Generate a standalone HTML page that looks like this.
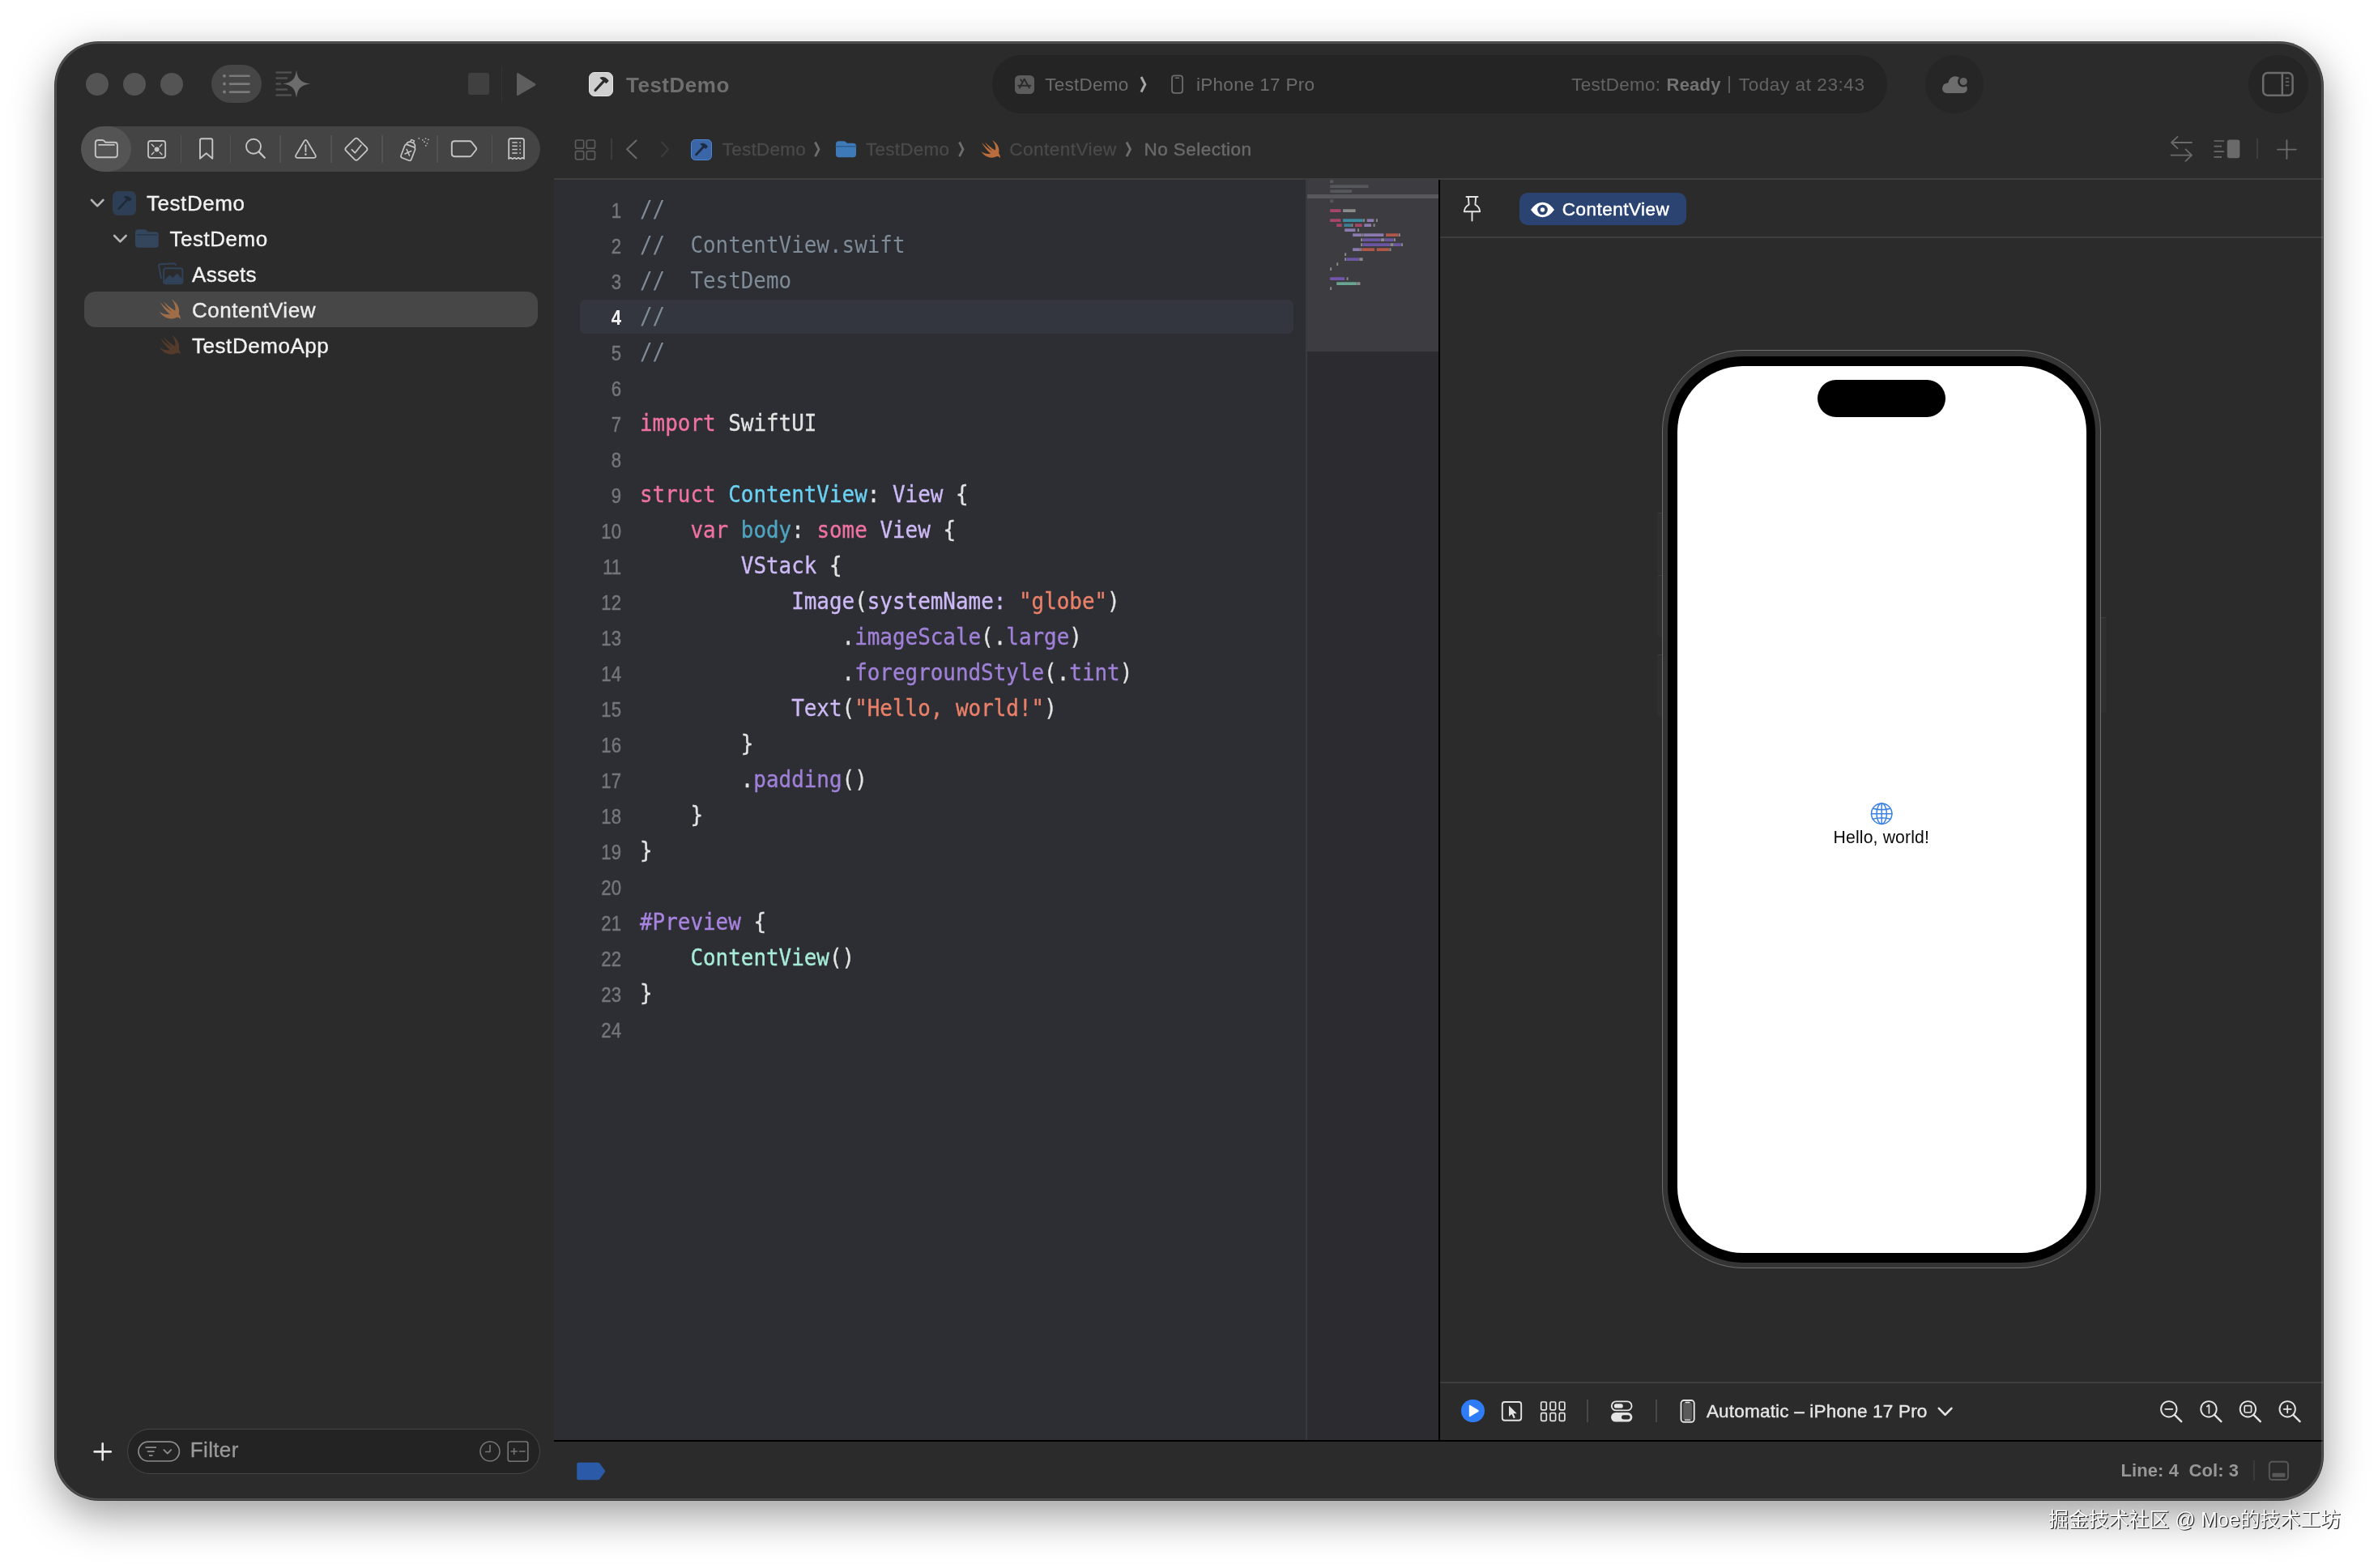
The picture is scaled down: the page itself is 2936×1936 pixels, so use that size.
<!DOCTYPE html>
<html lang="zh"><head><meta charset="utf-8"><title>TestDemo — ContentView.swift</title>
<style>
html,body{margin:0;padding:0}
body{width:2936px;height:1936px;background:#fff;position:relative;overflow:hidden}
#win{position:absolute;left:68px;top:52px;width:2800px;height:1800px;border-radius:54px;background:#2b2b2b;
 box-shadow:0 0 0 1px rgba(0,0,0,.72),0 18px 54px rgba(0,0,0,.4);}
#clip{position:absolute;left:0;top:0;width:2800px;height:1800px;border-radius:54px;overflow:hidden}
.pg{position:absolute;left:-68px;top:-52px;width:2936px;height:1936px;will-change:transform}
.pg>div{position:absolute;white-space:pre}
.ui{font-family:"Liberation Sans","Noto Sans CJK SC",sans-serif}
.mono{font-family:"DejaVu Sans Mono","Liberation Mono",monospace}
#edge{position:absolute;left:0;top:0;width:2800px;height:1800px;border-radius:54px;box-sizing:border-box;border:2px solid rgba(255,255,255,.17);pointer-events:none}
svg.ov{position:absolute;left:0;top:0}
.wm{position:absolute;white-space:pre;font-family:"Liberation Sans","Noto Sans CJK SC",sans-serif}
</style></head>
<body>
<div id="win"><div id="clip"><div class="pg">
<div style="left:684px;top:221px;width:929px;height:1557px;background:#2d2e33;"></div>
<div style="left:1613px;top:221px;width:164px;height:1557px;background:#2c2c30;"></div>
<div style="left:1612px;top:221px;width:2px;height:1557px;background:#3a3b3f;"></div>
<div style="left:1614px;top:221px;width:162px;height:213px;background:#3d3d41;"></div>
<div style="left:1614px;top:240px;width:162px;height:5px;background:#58585c;"></div>
<div style="left:1778px;top:221px;width:1090px;height:1557px;background:#2b2b2c;"></div>
<div style="left:1776px;top:222px;width:2px;height:1557px;background:#000;"></div>
<div style="left:684px;top:1778px;width:2184px;height:2px;background:#000;"></div>
<div style="left:684px;top:220px;width:2184px;height:2px;background:#3e3e3e;"></div>
<div style="left:1778px;top:292px;width:1090px;height:2px;background:#3e3e3e;"></div>
<div style="left:1778px;top:1706px;width:1090px;height:2px;background:#3e3e3e;"></div>
<div style="left:106px;top:90px;width:28px;height:28px;background:#545454;border-radius:50%"></div>
<div style="left:152px;top:90px;width:28px;height:28px;background:#545454;border-radius:50%"></div>
<div style="left:198px;top:90px;width:28px;height:28px;background:#545454;border-radius:50%"></div>
<div style="left:261px;top:80px;width:62px;height:47px;background:#464646;border-radius:24px"></div>
<div style="left:577.5px;top:90px;width:26.5px;height:26.5px;background:#404040;border-radius:3px"></div>
<div style="left:618.5px;top:82px;width:1.5px;height:44px;background:#333;"></div>
<div style="left:727px;top:89px;width:30px;height:30px;background:#cfcfcf;border-radius:7px;box-sizing:border-box;border:1.500px solid #e4e4e4"></div>
<div class="ui" style="left:773px;top:86.50px;height:36px;line-height:36px;font-size:26px;color:#6f6f6f;font-weight:bold;letter-spacing:0.5px;">TestDemo</div>
<div style="left:1225px;top:68px;width:1105px;height:72px;background:#242424;border-radius:36px"></div>
<div style="left:1253px;top:92.5px;width:23.5px;height:23.5px;background:#5c5c5c;border-radius:5.500px"></div>
<div class="ui" style="left:1290.2px;top:88.80px;height:31px;line-height:31px;font-size:22.5px;color:#6c6c6c;font-weight:normal;letter-spacing:0.25px;">TestDemo</div>
<div class="ui" style="left:1477px;top:88.80px;height:31px;line-height:31px;font-size:22.5px;color:#6c6c6c;font-weight:normal;letter-spacing:0.28px;">iPhone 17 Pro</div>
<div class="ui" style="left:1940.2px;top:88.80px;height:31px;line-height:31px;font-size:22.5px;color:#636363;font-weight:normal;letter-spacing:0.3px;">TestDemo: </div>
<div class="ui" style="left:2057.5px;top:88.80px;height:31px;line-height:31px;font-size:22px;color:#737373;font-weight:bold;letter-spacing:0.25px;">Ready</div>
<div style="left:2134.2px;top:94px;width:1.8px;height:21px;background:#5a5a5a;"></div>
<div class="ui" style="left:2146.8px;top:88.80px;height:31px;line-height:31px;font-size:22.5px;color:#636363;font-weight:normal;letter-spacing:0.58px;">Today at 23:43</div>
<div style="left:2377px;top:68px;width:72px;height:72px;background:#262626;border-radius:50%"></div>
<div style="left:2776px;top:68px;width:74px;height:72px;background:#252525;border-radius:36px"></div>
<div style="left:754px;top:171px;width:1.5px;height:26px;background:#3c3c3c;"></div>
<div style="left:853px;top:172px;width:25.5px;height:25.5px;background:#3a66a8;border-radius:5.500px;box-sizing:border-box;border:1.800px solid #4d86d6"></div>
<div class="ui" style="left:891.8px;top:168.80px;height:31px;line-height:31px;font-size:22.5px;color:#4a4a4a;font-weight:normal;letter-spacing:0.25px;-webkit-text-stroke:0.300px #4a4a4a;">TestDemo</div>
<div class="ui" style="left:1069px;top:168.80px;height:31px;line-height:31px;font-size:22.5px;color:#4a4a4a;font-weight:normal;letter-spacing:0.25px;-webkit-text-stroke:0.300px #4a4a4a;">TestDemo</div>
<div class="ui" style="left:1246.2px;top:168.80px;height:31px;line-height:31px;font-size:22.5px;color:#4a4a4a;font-weight:normal;letter-spacing:0.5px;-webkit-text-stroke:0.300px #4a4a4a;">ContentView</div>
<div class="ui" style="left:1412.5px;top:168.80px;height:31px;line-height:31px;font-size:22.5px;color:#6a6a6a;font-weight:normal;letter-spacing:0.45px;-webkit-text-stroke:0.4px #6a6a6a;">No Selection</div>
<div style="left:2786px;top:171px;width:1.6px;height:25px;background:#3e3e3e;"></div>
<div style="left:100px;top:156px;width:567px;height:56px;background:#444444;border-radius:28px"></div>
<div style="left:100px;top:156px;width:62px;height:56px;background:#545454;border-radius:28px"></div>
<div style="left:222.89999999999998px;top:166.5px;width:1.6px;height:34px;background:#525252;"></div>
<div style="left:283.7px;top:166.5px;width:1.6px;height:34px;background:#525252;"></div>
<div style="left:345.2px;top:166.5px;width:1.6px;height:34px;background:#525252;"></div>
<div style="left:408.2px;top:166.5px;width:1.6px;height:34px;background:#525252;"></div>
<div style="left:471.2px;top:166.5px;width:1.6px;height:34px;background:#525252;"></div>
<div style="left:539.2px;top:166.5px;width:1.6px;height:34px;background:#525252;"></div>
<div style="left:606.9000000000001px;top:166.5px;width:1.6px;height:34px;background:#525252;"></div>
<div style="left:104px;top:360px;width:560px;height:44px;background:#474747;border-radius:14px"></div>
<div class="ui" style="left:181px;top:232.50px;height:36px;line-height:36px;font-size:26px;color:#f2f2f2;font-weight:normal;letter-spacing:0.55px;-webkit-text-stroke:0.350px #f2f2f2;">TestDemo</div>
<div class="ui" style="left:209.4px;top:276.50px;height:36px;line-height:36px;font-size:26px;color:#f2f2f2;font-weight:normal;letter-spacing:0.55px;-webkit-text-stroke:0.350px #f2f2f2;">TestDemo</div>
<div class="ui" style="left:237px;top:320.50px;height:36px;line-height:36px;font-size:26px;color:#f2f2f2;font-weight:normal;letter-spacing:0.3px;-webkit-text-stroke:0.350px #f2f2f2;">Assets</div>
<div class="ui" style="left:237px;top:364.50px;height:36px;line-height:36px;font-size:26px;color:#ededed;font-weight:normal;letter-spacing:0.55px;-webkit-text-stroke:0.350px #ededed;">ContentView</div>
<div class="ui" style="left:237px;top:408.50px;height:36px;line-height:36px;font-size:26px;color:#f2f2f2;font-weight:normal;letter-spacing:0.55px;-webkit-text-stroke:0.350px #f2f2f2;">TestDemoApp</div>
<div style="left:139px;top:235.5px;width:29px;height:30px;background:#2c3f57;border-radius:6.500px;box-sizing:border-box;border:2px solid #303e52"></div>
<div style="left:157px;top:1764px;width:510px;height:56px;background:#232323;border-radius:28px;box-sizing:border-box;border:1.500px solid #474747"></div>
<div class="ui" style="left:234.8px;top:1771.60px;height:36px;line-height:36px;font-size:26px;color:#9a9a9a;font-weight:normal;letter-spacing:0.35px;-webkit-text-stroke:0.300px #9a9a9a;">Filter</div>
<div style="left:716px;top:369.5px;width:881px;height:42px;background:#34363f;border-radius:7px"></div>
<div class="ui" style="right:2168.8px;top:242.50px;height:35px;line-height:35px;font-size:25.2px;color:#75767c;font-weight:normal;letter-spacing:0px;transform:scaleX(.880);transform-origin:100% 50%;-webkit-text-stroke:0.450px #75767c;">1</div>
<div class="mono" style="left:789.600px;top:236.00px;height:44px;line-height:44px;font-size:28.6px;transform:scaleX(0.9060);transform-origin:0 50%"><span style="color:#7f8c98">//</span></div>
<div class="ui" style="right:2168.8px;top:286.50px;height:35px;line-height:35px;font-size:25.2px;color:#75767c;font-weight:normal;letter-spacing:0px;transform:scaleX(.880);transform-origin:100% 50%;-webkit-text-stroke:0.450px #75767c;">2</div>
<div class="mono" style="left:789.600px;top:280.00px;height:44px;line-height:44px;font-size:28.6px;transform:scaleX(0.9060);transform-origin:0 50%"><span style="color:#7f8c98">//  ContentView.swift</span></div>
<div class="ui" style="right:2168.8px;top:330.50px;height:35px;line-height:35px;font-size:25.2px;color:#75767c;font-weight:normal;letter-spacing:0px;transform:scaleX(.880);transform-origin:100% 50%;-webkit-text-stroke:0.450px #75767c;">3</div>
<div class="mono" style="left:789.600px;top:324.00px;height:44px;line-height:44px;font-size:28.6px;transform:scaleX(0.9060);transform-origin:0 50%"><span style="color:#7f8c98">//  TestDemo</span></div>
<div class="ui" style="right:2168.8px;top:374.50px;height:35px;line-height:35px;font-size:25.2px;color:#f2f2f2;font-weight:bold;letter-spacing:0px;transform:scaleX(.880);transform-origin:100% 50%;">4</div>
<div class="mono" style="left:789.600px;top:368.00px;height:44px;line-height:44px;font-size:28.6px;transform:scaleX(0.9060);transform-origin:0 50%"><span style="color:#7f8c98">//</span></div>
<div class="ui" style="right:2168.8px;top:418.50px;height:35px;line-height:35px;font-size:25.2px;color:#75767c;font-weight:normal;letter-spacing:0px;transform:scaleX(.880);transform-origin:100% 50%;-webkit-text-stroke:0.450px #75767c;">5</div>
<div class="mono" style="left:789.600px;top:412.00px;height:44px;line-height:44px;font-size:28.6px;transform:scaleX(0.9060);transform-origin:0 50%"><span style="color:#7f8c98">//</span></div>
<div class="ui" style="right:2168.8px;top:462.50px;height:35px;line-height:35px;font-size:25.2px;color:#75767c;font-weight:normal;letter-spacing:0px;transform:scaleX(.880);transform-origin:100% 50%;-webkit-text-stroke:0.450px #75767c;">6</div>
<div class="ui" style="right:2168.8px;top:506.50px;height:35px;line-height:35px;font-size:25.2px;color:#75767c;font-weight:normal;letter-spacing:0px;transform:scaleX(.880);transform-origin:100% 50%;-webkit-text-stroke:0.450px #75767c;">7</div>
<div class="mono" style="left:789.600px;top:500.00px;height:44px;line-height:44px;font-size:28.6px;-webkit-text-stroke:0.350px;transform:scaleX(0.9060);transform-origin:0 50%"><span style="color:#ef72a2">import</span><span style="color:#e3e3e3"> SwiftUI</span></div>
<div class="ui" style="right:2168.8px;top:550.50px;height:35px;line-height:35px;font-size:25.2px;color:#75767c;font-weight:normal;letter-spacing:0px;transform:scaleX(.880);transform-origin:100% 50%;-webkit-text-stroke:0.450px #75767c;">8</div>
<div class="ui" style="right:2168.8px;top:594.50px;height:35px;line-height:35px;font-size:25.2px;color:#75767c;font-weight:normal;letter-spacing:0px;transform:scaleX(.880);transform-origin:100% 50%;-webkit-text-stroke:0.450px #75767c;">9</div>
<div class="mono" style="left:789.600px;top:588.00px;height:44px;line-height:44px;font-size:28.6px;-webkit-text-stroke:0.350px;transform:scaleX(0.9060);transform-origin:0 50%"><span style="color:#ef72a2">struct</span><span style="color:#e3e3e3"> </span><span style="color:#6bd2f4">ContentView</span><span style="color:#e3e3e3">: </span><span style="color:#cdb9f6">View</span><span style="color:#e3e3e3"> {</span></div>
<div class="ui" style="right:2168.8px;top:638.50px;height:35px;line-height:35px;font-size:25.2px;color:#75767c;font-weight:normal;letter-spacing:0px;transform:scaleX(.880);transform-origin:100% 50%;-webkit-text-stroke:0.450px #75767c;">10</div>
<div class="mono" style="left:789.600px;top:632.00px;height:44px;line-height:44px;font-size:28.6px;-webkit-text-stroke:0.350px;transform:scaleX(0.9060);transform-origin:0 50%"><span style="color:#e3e3e3">    </span><span style="color:#ef72a2">var</span><span style="color:#e3e3e3"> </span><span style="color:#4fa5c0">body</span><span style="color:#e3e3e3">: </span><span style="color:#ef72a2">some</span><span style="color:#e3e3e3"> </span><span style="color:#cdb9f6">View</span><span style="color:#e3e3e3"> {</span></div>
<div class="ui" style="right:2168.8px;top:682.50px;height:35px;line-height:35px;font-size:25.2px;color:#75767c;font-weight:normal;letter-spacing:0px;transform:scaleX(.880);transform-origin:100% 50%;-webkit-text-stroke:0.450px #75767c;">11</div>
<div class="mono" style="left:789.600px;top:676.00px;height:44px;line-height:44px;font-size:28.6px;-webkit-text-stroke:0.350px;transform:scaleX(0.9060);transform-origin:0 50%"><span style="color:#e3e3e3">        </span><span style="color:#cdb9f6">VStack</span><span style="color:#e3e3e3"> {</span></div>
<div class="ui" style="right:2168.8px;top:726.50px;height:35px;line-height:35px;font-size:25.2px;color:#75767c;font-weight:normal;letter-spacing:0px;transform:scaleX(.880);transform-origin:100% 50%;-webkit-text-stroke:0.450px #75767c;">12</div>
<div class="mono" style="left:789.600px;top:720.00px;height:44px;line-height:44px;font-size:28.6px;-webkit-text-stroke:0.350px;transform:scaleX(0.9060);transform-origin:0 50%"><span style="color:#e3e3e3">            </span><span style="color:#cdb9f6">Image</span><span style="color:#e3e3e3">(</span><span style="color:#cdb9f6">systemName:</span><span style="color:#e3e3e3"> </span><span style="color:#ea8069">"globe"</span><span style="color:#e3e3e3">)</span></div>
<div class="ui" style="right:2168.8px;top:770.50px;height:35px;line-height:35px;font-size:25.2px;color:#75767c;font-weight:normal;letter-spacing:0px;transform:scaleX(.880);transform-origin:100% 50%;-webkit-text-stroke:0.450px #75767c;">13</div>
<div class="mono" style="left:789.600px;top:764.00px;height:44px;line-height:44px;font-size:28.6px;-webkit-text-stroke:0.350px;transform:scaleX(0.9060);transform-origin:0 50%"><span style="color:#e3e3e3">                .</span><span style="color:#a081d8">imageScale</span><span style="color:#e3e3e3">(.</span><span style="color:#a081d8">large</span><span style="color:#e3e3e3">)</span></div>
<div class="ui" style="right:2168.8px;top:814.50px;height:35px;line-height:35px;font-size:25.2px;color:#75767c;font-weight:normal;letter-spacing:0px;transform:scaleX(.880);transform-origin:100% 50%;-webkit-text-stroke:0.450px #75767c;">14</div>
<div class="mono" style="left:789.600px;top:808.00px;height:44px;line-height:44px;font-size:28.6px;-webkit-text-stroke:0.350px;transform:scaleX(0.9060);transform-origin:0 50%"><span style="color:#e3e3e3">                .</span><span style="color:#a081d8">foregroundStyle</span><span style="color:#e3e3e3">(.</span><span style="color:#a081d8">tint</span><span style="color:#e3e3e3">)</span></div>
<div class="ui" style="right:2168.8px;top:858.50px;height:35px;line-height:35px;font-size:25.2px;color:#75767c;font-weight:normal;letter-spacing:0px;transform:scaleX(.880);transform-origin:100% 50%;-webkit-text-stroke:0.450px #75767c;">15</div>
<div class="mono" style="left:789.600px;top:852.00px;height:44px;line-height:44px;font-size:28.6px;-webkit-text-stroke:0.350px;transform:scaleX(0.9060);transform-origin:0 50%"><span style="color:#e3e3e3">            </span><span style="color:#cdb9f6">Text</span><span style="color:#e3e3e3">(</span><span style="color:#ea8069">"Hello, world!"</span><span style="color:#e3e3e3">)</span></div>
<div class="ui" style="right:2168.8px;top:902.50px;height:35px;line-height:35px;font-size:25.2px;color:#75767c;font-weight:normal;letter-spacing:0px;transform:scaleX(.880);transform-origin:100% 50%;-webkit-text-stroke:0.450px #75767c;">16</div>
<div class="mono" style="left:789.600px;top:896.00px;height:44px;line-height:44px;font-size:28.6px;-webkit-text-stroke:0.350px;transform:scaleX(0.9060);transform-origin:0 50%"><span style="color:#e3e3e3">        }</span></div>
<div class="ui" style="right:2168.8px;top:946.50px;height:35px;line-height:35px;font-size:25.2px;color:#75767c;font-weight:normal;letter-spacing:0px;transform:scaleX(.880);transform-origin:100% 50%;-webkit-text-stroke:0.450px #75767c;">17</div>
<div class="mono" style="left:789.600px;top:940.00px;height:44px;line-height:44px;font-size:28.6px;-webkit-text-stroke:0.350px;transform:scaleX(0.9060);transform-origin:0 50%"><span style="color:#e3e3e3">        .</span><span style="color:#a081d8">padding</span><span style="color:#e3e3e3">()</span></div>
<div class="ui" style="right:2168.8px;top:990.50px;height:35px;line-height:35px;font-size:25.2px;color:#75767c;font-weight:normal;letter-spacing:0px;transform:scaleX(.880);transform-origin:100% 50%;-webkit-text-stroke:0.450px #75767c;">18</div>
<div class="mono" style="left:789.600px;top:984.00px;height:44px;line-height:44px;font-size:28.6px;-webkit-text-stroke:0.350px;transform:scaleX(0.9060);transform-origin:0 50%"><span style="color:#e3e3e3">    }</span></div>
<div class="ui" style="right:2168.8px;top:1034.50px;height:35px;line-height:35px;font-size:25.2px;color:#75767c;font-weight:normal;letter-spacing:0px;transform:scaleX(.880);transform-origin:100% 50%;-webkit-text-stroke:0.450px #75767c;">19</div>
<div class="mono" style="left:789.600px;top:1028.00px;height:44px;line-height:44px;font-size:28.6px;-webkit-text-stroke:0.350px;transform:scaleX(0.9060);transform-origin:0 50%"><span style="color:#e3e3e3">}</span></div>
<div class="ui" style="right:2168.8px;top:1078.50px;height:35px;line-height:35px;font-size:25.2px;color:#75767c;font-weight:normal;letter-spacing:0px;transform:scaleX(.880);transform-origin:100% 50%;-webkit-text-stroke:0.450px #75767c;">20</div>
<div class="ui" style="right:2168.8px;top:1122.50px;height:35px;line-height:35px;font-size:25.2px;color:#75767c;font-weight:normal;letter-spacing:0px;transform:scaleX(.880);transform-origin:100% 50%;-webkit-text-stroke:0.450px #75767c;">21</div>
<div class="mono" style="left:789.600px;top:1116.00px;height:44px;line-height:44px;font-size:28.6px;-webkit-text-stroke:0.350px;transform:scaleX(0.9060);transform-origin:0 50%"><span style="color:#a884e0">#Preview</span><span style="color:#e3e3e3"> {</span></div>
<div class="ui" style="right:2168.8px;top:1166.50px;height:35px;line-height:35px;font-size:25.2px;color:#75767c;font-weight:normal;letter-spacing:0px;transform:scaleX(.880);transform-origin:100% 50%;-webkit-text-stroke:0.450px #75767c;">22</div>
<div class="mono" style="left:789.600px;top:1160.00px;height:44px;line-height:44px;font-size:28.6px;-webkit-text-stroke:0.350px;transform:scaleX(0.9060);transform-origin:0 50%"><span style="color:#e3e3e3">    </span><span style="color:#a6ecd9">ContentView</span><span style="color:#e3e3e3">()</span></div>
<div class="ui" style="right:2168.8px;top:1210.50px;height:35px;line-height:35px;font-size:25.2px;color:#75767c;font-weight:normal;letter-spacing:0px;transform:scaleX(.880);transform-origin:100% 50%;-webkit-text-stroke:0.450px #75767c;">23</div>
<div class="mono" style="left:789.600px;top:1204.00px;height:44px;line-height:44px;font-size:28.6px;-webkit-text-stroke:0.350px;transform:scaleX(0.9060);transform-origin:0 50%"><span style="color:#e3e3e3">}</span></div>
<div class="ui" style="right:2168.8px;top:1254.50px;height:35px;line-height:35px;font-size:25.2px;color:#75767c;font-weight:normal;letter-spacing:0px;transform:scaleX(.880);transform-origin:100% 50%;-webkit-text-stroke:0.450px #75767c;">24</div>
<div class="ui" style="left:2618.4px;top:1800.30px;height:31px;line-height:31px;font-size:22px;color:#979797;font-weight:bold;letter-spacing:0.1px;">Line: 4  Col: 3</div>
<div style="left:2782px;top:1803px;width:1.6px;height:25px;background:#3a3a3a;"></div>
<div style="left:1876px;top:238px;width:206px;height:40px;background:#2b4371;border-radius:10px"></div>
<div class="ui" style="left:1928.7px;top:242.80px;height:31px;line-height:31px;font-size:22.5px;color:#fff;font-weight:normal;letter-spacing:0.5px;-webkit-text-stroke:0.450px #fff;">ContentView</div>
<div style="left:2045.5px;top:633px;width:7px;height:76px;background:#2f2f30;border-radius:2px;box-sizing:border-box;border-top:1.500px solid #3d3d3d"></div>
<div style="left:2045.5px;top:710px;width:7px;height:76px;background:#2f2f30;border-radius:2px;box-sizing:border-box;border-top:1.500px solid #3d3d3d"></div>
<div style="left:2045.5px;top:808px;width:7px;height:77px;background:#2f2f30;border-radius:2px;box-sizing:border-box;border-top:1.500px solid #3d3d3d"></div>
<div style="left:2593.5px;top:762px;width:7px;height:118px;background:#2f2f30;border-radius:2px;box-sizing:border-box;border-top:1.500px solid #3d3d3d"></div>
<div style="left:2052px;top:432px;width:542px;height:1134px;background:#343435;border-radius:100px;box-sizing:border-box;border:1.500px solid #6e6e6e"></div>
<div style="left:2059px;top:440px;width:528px;height:1119px;background:#000;border-radius:93px"></div>
<div style="left:2071px;top:452px;width:505px;height:1095px;background:#fff;border-radius:81px"></div>
<div style="left:2244px;top:469.3px;width:157.5px;height:46px;background:#000;border-radius:23px"></div>
<div class="ui" style="left:1822.8000000000002px;width:1000px;text-align:center;top:1018.60px;height:30px;line-height:30px;font-size:21.2px;color:#0a0a0a;font-weight:normal;letter-spacing:0.15px;">Hello, world!</div>
<div style="left:1804px;top:1727.7px;width:28.6px;height:28.6px;background:#2f7cf6;border-radius:50%"></div>
<div style="left:1959.2px;top:1728px;width:1.6px;height:28px;background:#484848;"></div>
<div style="left:2044px;top:1728px;width:1.6px;height:28px;background:#484848;"></div>
<div class="ui" style="left:2106.9px;top:1726.70px;height:31px;line-height:31px;font-size:22.5px;color:#e6e6e6;font-weight:normal;letter-spacing:0.2px;-webkit-text-stroke:0.400px #e6e6e6;">Automatic – iPhone 17 Pro</div>
<svg class="ov" width="2936" height="1936" viewBox="0 0 2936 1936" fill="none" stroke-linecap="round" stroke-linejoin="round">
<circle cx="277" cy="93.8" r="2" fill="#7a7a7a"/>
<path d="M284 93.8H307.5" stroke="#7a7a7a" stroke-width="2.6"/>
<circle cx="277" cy="103.6" r="2" fill="#7a7a7a"/>
<path d="M284 103.6H307.5" stroke="#7a7a7a" stroke-width="2.6"/>
<circle cx="277" cy="113.6" r="2" fill="#7a7a7a"/>
<path d="M284 113.6H307.5" stroke="#7a7a7a" stroke-width="2.6"/>
<path d="M340.5 89.5H360" stroke="#505050" stroke-width="2.4" stroke-linecap="butt"/>
<path d="M340.5 96.5H355" stroke="#505050" stroke-width="2.4" stroke-linecap="butt"/>
<path d="M340.5 103.5H347" stroke="#505050" stroke-width="2.4" stroke-linecap="butt"/>
<path d="M340.5 110.5H355" stroke="#505050" stroke-width="2.4" stroke-linecap="butt"/>
<path d="M340.5 117.5H360" stroke="#505050" stroke-width="2.4" stroke-linecap="butt"/>
<path d="M366 86.5C367.6 98 371 101.600 383 103.5C371 105.4 367.6 109 366 121C364.4 109 361 105.4 349 103.5C361 101.600 364.4 98 366 86.5Z" fill="#6c6c6c"/>
<path d="M638 91.500V116.500Q638 118.800 640 117.700L660.500 105.700Q662.500 104.300 660.500 103L640 90.300Q638 89.200 638 91.500Z" fill="#5e5e5e"/>
<path d="M735 111.500L745.800 99.800" stroke="#2b2b2b" stroke-width="3.2"/><path d="M741.500 96.200Q746.500 94.500 750.800 99.800L748.400 102.200L744.500 98.800Z" fill="#2b2b2b" stroke="#2b2b2b" stroke-width="1.5"/>
<g stroke="#2a2a2a" stroke-width="1.9"><path d="M1264.700 97.800L1258.800 108.500"/><path d="M1264.700 97.800L1270.800 108.500"/><path d="M1257.300 105.800H1272.300"/><path d="M1261.600 100.500L1260.200 98.200"/></g>
<path d="M1409 95L1413.800 104.300L1409 113.600" stroke="#a8a8a8" stroke-width="3" stroke-linejoin="miter" stroke-linecap="butt"/>
<rect x="1447" y="93.300" width="13" height="21.500" rx="3" stroke="#6c6c6c" stroke-width="1.8"/><path d="M1451.500 96.200H1455.500" stroke="#6c6c6c" stroke-width="1.6"/>
<path d="M2403.500 115H2423.500Q2428.800 114.600 2428.800 109.600Q2428.600 105.400 2424.500 104.600Q2424.500 99.400 2419.800 96.200Q2413.500 92.200 2408 96.800Q2405.800 99 2405.300 102.200Q2398.500 102.800 2398 109Q2398.200 114.600 2403.500 115Z" fill="#6d6d6d"/><circle cx="2423.800" cy="100.800" r="6.800" fill="#262626"/><circle cx="2424.200" cy="100.600" r="4.600" fill="#666"/>
<rect x="2794.200" y="90" width="36.400" height="27.800" rx="5.500" stroke="#6c6c6c" stroke-width="2.5"/><path d="M2817.800 90V117.800" stroke="#6c6c6c" stroke-width="2.4" stroke-linecap="butt"/><path d="M2821.800 96.500H2826.200M2821.800 101H2826.200M2821.800 105.500H2826.200" stroke="#6c6c6c" stroke-width="1.6" stroke-linecap="butt"/>
<rect x="710.5" y="173" width="10.200" height="10.200" rx="2" stroke="#5c5c5c" stroke-width="1.700"/>
<rect x="724.3" y="173" width="10.200" height="10.200" rx="2" stroke="#5c5c5c" stroke-width="1.700"/>
<rect x="710.5" y="186.6" width="10.200" height="10.200" rx="2" stroke="#5c5c5c" stroke-width="1.700"/>
<rect x="724.3" y="186.6" width="10.200" height="10.200" rx="2" stroke="#5c5c5c" stroke-width="1.700"/>
<path d="M785.500 173.500L774.200 184.300L785.500 195.200" stroke="#6a6a6a" stroke-width="2.1"/>
<path d="M817 175.500L825 184.300L817 193.200" stroke="#3b3b3b" stroke-width="2.1"/>
<path d="M859.500 191L868.800 181" stroke="#1d2c44" stroke-width="2.8"/><path d="M865.200 177.800Q869.600 176.500 873.200 181L871.200 183L867.800 180.200Z" fill="#1d2c44" stroke="#1d2c44" stroke-width="1.3"/>
<path d="M1006.500 175.500L1011 184.300L1006.500 193.200" stroke="#6e6e6e" stroke-width="2.8" stroke-linejoin="miter" stroke-linecap="butt"/>
<path d="M1032 178Q1032 174.300 1035.500 174.300H1041.500Q1043.500 174.300 1044.600 175.600L1045.800 176.800H1053.500Q1057 176.800 1057 180.300V190.500Q1057 194.200 1053.400 194.200H1035.600Q1032 194.200 1032 190.500Z" fill="#3f7ab8"/><path d="M1032 180.800H1057" stroke="#2d5c8e" stroke-width="1.4"/>
<path d="M1184.500 175.500L1189 184.300L1184.500 193.200" stroke="#6e6e6e" stroke-width="2.8" stroke-linejoin="miter" stroke-linecap="butt"/>
<path transform="translate(1211.500 172.800)" d="M0.600 3.200C4.800 7.800 9.500 11.600 13.800 14C9.800 10.200 6.200 5.800 4.400 2.600C8.600 6.800 13.400 10.600 17.400 12.800C18.400 9.200 17 4.600 13.600 0.300C19.800 3.800 23.200 10.400 21.600 16.400C23.400 18.800 23.800 21.400 23.200 22.400C22.200 20.400 20.600 19.800 18.800 20.400C15.800 22 12 22.400 8.200 21C4.800 19.800 2 17.400 0 14.200C3.600 16.600 8 17.800 11.600 16.800C7.200 13.200 3.200 8.200 0.600 3.200Z" fill="#b96c3c"/>
<path d="M1391 175.500L1395.500 184.300L1391 193.200" stroke="#6e6e6e" stroke-width="2.8" stroke-linejoin="miter" stroke-linecap="butt"/>
<g stroke="#6a6a6a" stroke-width="1.800"><path d="M2706 176H2681M2688.500 168.800L2681 176L2688.500 183.200"/><path d="M2680.500 191.600H2706M2698.500 184.400L2706 191.600L2698.500 198.800"/></g>
<path d="M2733.500 174H2746M2733.500 180.600H2743M2733.500 187.200H2746M2733.500 193.800H2743" stroke="#6a6a6a" stroke-width="1.700" stroke-linecap="butt"/><rect x="2749.800" y="172.600" width="15.600" height="22.600" rx="3" fill="#6a6a6a"/>
<path d="M2812 184.600H2834.800M2823.400 173.200V196" stroke="#6a6a6a" stroke-width="1.900"/>
<g stroke="#c4c4c4" stroke-width="1.900"><path d="M117.800 176.500Q117.800 173 121.300 173H126Q127.800 173 128.800 174.200L130.200 175.800H141.400Q144.900 175.800 144.900 179.300V190.700Q144.900 194.200 141.400 194.200H121.300Q117.800 194.200 117.800 190.700Z"/><path d="M121.800 178.900H141" stroke-width="1.600"/></g>
<g stroke="#c4c4c4" stroke-width="1.800"><rect x="183" y="174" width="21.200" height="20.800" rx="3"/><path d="M187.300 178.300L190 181M199.900 178.300L197.200 181M187.300 190.700L190 188M199.900 190.700L197.200 188" stroke-width="1.500"/></g><circle cx="193.600" cy="184.500" r="3" fill="#c4c4c4"/>
<path d="M247 173.200Q247 171.200 249 171.200H260.300Q262.300 171.200 262.300 173.200V195.800L254.650 189.300L247 195.800Z" stroke="#c4c4c4" stroke-width="1.900"/>
<circle cx="313" cy="180.800" r="9" stroke="#c4c4c4" stroke-width="1.900"/><path d="M319.600 187.400L326.800 194.800" stroke="#c4c4c4" stroke-width="2.300"/>
<path d="M375.600 174.300Q377.400 171.600 379.200 174.300L389.500 191.600Q390.800 194.600 387.600 194.800H367.200Q364 194.600 365.300 191.600Z" stroke="#c4c4c4" stroke-width="1.800"/><path d="M377.400 179.200V187" stroke="#c4c4c4" stroke-width="1.900"/><circle cx="377.400" cy="190.600" r="1.300" fill="#c4c4c4"/>
<g stroke="#c4c4c4" stroke-width="1.800"><path d="M437.800 171.600Q439.900 169.700 442 171.600L452.600 182.200Q454.400 184.200 452.600 186.200L442 196.800Q439.900 198.700 437.800 196.800L427.200 186.200Q425.400 184.200 427.200 182.200Z"/><path d="M434.400 184.800L438.300 188.700L445.800 179.300"/></g>
<g transform="translate(504.600 186.200) rotate(21)" stroke="#c4c4c4" stroke-width="1.700"><rect x="-6.800" y="-6.500" width="13.600" height="17.600" rx="2.600"/><path d="M-5.600 -6.800Q-5 -11.200 0 -11.200Q5 -11.200 5.600 -6.800"/><path d="M-2 -11.400V-14H2V-11.400" stroke-width="1.500"/><path d="M-3 -0.800L3 5.200M3 -0.800L-3 5.200" stroke-width="1.500"/></g>
<circle cx="517.3" cy="170.8" r="0.850" fill="#c4c4c4"/>
<circle cx="521.8" cy="172.8" r="0.850" fill="#c4c4c4"/>
<circle cx="525.5" cy="171" r="0.850" fill="#c4c4c4"/>
<circle cx="528.8" cy="172.3" r="0.850" fill="#c4c4c4"/>
<circle cx="524" cy="175.2" r="0.850" fill="#c4c4c4"/>
<circle cx="527.5" cy="177" r="0.850" fill="#c4c4c4"/>
<circle cx="525.8" cy="179.8" r="0.850" fill="#c4c4c4"/>
<path d="M561.200 174.200H579.800Q581.200 174.200 582.200 175.300L587.800 182.400Q588.500 183.700 587.800 185L582.200 192Q581.200 193.200 579.800 193.200H561.200Q557.800 193.200 557.800 189.800V177.600Q557.800 174.200 561.200 174.200Z" stroke="#c4c4c4" stroke-width="1.900"/>
<g stroke="#c4c4c4" stroke-width="1.800"><path d="M628.200 196V173.600Q628.200 171 630.800 171H644.400Q647 171 647 173.600V196L644.700 194.800L642.300 196.200L640 194.800L637.600 196.200L635.300 194.800L632.900 196.200L630.600 194.800Z"/><path d="M632.300 176H638.800M641.300 176H643M632.300 180.300H638.800M641.300 180.300H643M632.300 184.600H638.800M641.300 184.600H643M632.300 188.900H638.800M641.300 188.900H643" stroke-width="1.500" stroke-linecap="butt"/></g>
<path d="M113 247L120.200 254.300L127.400 247" stroke="#b4b4b4" stroke-width="2.600"/>
<path d="M141.200 291L148.400 298.300L155.600 291" stroke="#b4b4b4" stroke-width="2.600"/>
<path d="M146.800 257.600L157 246.600" stroke="#1f2a37" stroke-width="2.500"/><path d="M153.600 243Q158 241.600 161.800 246L159.800 248L156.200 245.200Z" fill="#1f2a37" stroke="#1f2a37" stroke-width="1.200"/>
<path d="M167 287.300Q167 283.300 171 283.300H178Q180.200 283.300 181.400 284.700L182.800 286.200H191.800Q195.800 286.200 195.800 290.200V301.800Q195.800 305.800 191.800 305.800H171Q167 305.800 167 301.800Z" fill="#33465b"/><path d="M169.500 289.800H193.500" stroke="#29394a" stroke-width="1.800"/>
<g stroke="#31435a" stroke-width="1.900"><path d="M199 343.500L196 328.500Q195.800 326.600 197.700 326.300L214.800 325.200Q216.600 325.300 217 327"/><rect x="202.200" y="331.200" width="23.200" height="19" rx="2.800" fill="#2b2b2b"/><path d="M203.500 346.500L209.500 340.500L213.500 344L218.500 338.500L224.500 345" stroke-width="1.600"/></g><path d="M203.200 347L209.500 341L213.500 344.500L218.500 339L224.500 345.500V349.200H203.200Z" fill="#31435a"/>
<path transform="translate(197 369.500) scale(1.100)" d="M0.600 3.200C4.800 7.800 9.500 11.600 13.800 14C9.800 10.200 6.200 5.800 4.400 2.600C8.600 6.800 13.400 10.600 17.400 12.800C18.400 9.200 17 4.600 13.600 0.300C19.800 3.800 23.200 10.400 21.600 16.400C23.400 18.800 23.800 21.400 23.200 22.400C22.200 20.400 20.600 19.800 18.800 20.400C15.800 22 12 22.400 8.200 21C4.800 19.800 2 17.400 0 14.200C3.600 16.600 8 17.800 11.600 16.800C7.200 13.200 3.200 8.200 0.600 3.200Z" fill="#9f6e49"/>
<path transform="translate(197 413.500) scale(1.100)" d="M0.600 3.200C4.800 7.800 9.500 11.600 13.800 14C9.800 10.200 6.200 5.800 4.400 2.600C8.600 6.800 13.400 10.600 17.400 12.800C18.400 9.200 17 4.600 13.600 0.300C19.800 3.800 23.200 10.400 21.600 16.400C23.400 18.800 23.800 21.400 23.200 22.400C22.200 20.400 20.600 19.800 18.800 20.400C15.800 22 12 22.400 8.200 21C4.800 19.800 2 17.400 0 14.200C3.600 16.600 8 17.800 11.600 16.800C7.200 13.200 3.200 8.200 0.600 3.200Z" fill="#553b2b"/>
<path d="M116.600 1792.400H136.800M126.700 1782.300V1802.500" stroke="#e8e8e8" stroke-width="2.600"/>
<rect x="171" y="1780.200" width="50.400" height="23.800" rx="11.900" stroke="#8c8c8c" stroke-width="1.700"/><path d="M179.500 1787.200H193M181.800 1792.200H190.700M184 1797.200H188.500" stroke="#8c8c8c" stroke-width="1.700" stroke-linecap="butt"/><path d="M202.400 1790.200L206.800 1794.600L211.200 1790.200" stroke="#8c8c8c" stroke-width="1.900"/>
<g stroke="#767676" stroke-width="1.600"><circle cx="605" cy="1792" r="12"/><path d="M605 1784.500V1792.500H599.500"/><rect x="627.200" y="1780" width="24.600" height="24.200" rx="2.500"/><path d="M631.200 1792H638.200M634.700 1788.500V1795.500M641.500 1792H648"/></g>
<rect x="1642.20" y="222.30" width="4.19" height="3.700" fill="#55575c"/>
<rect x="1642.20" y="228.30" width="47.32" height="3.700" fill="#55575c"/>
<rect x="1642.20" y="234.30" width="26.89" height="3.700" fill="#55575c"/>
<rect x="1642.20" y="240.30" width="4.19" height="3.700" fill="#55575c"/>
<rect x="1642.20" y="246.30" width="4.19" height="3.700" fill="#55575c"/>
<rect x="1642.20" y="258.30" width="13.27" height="3.700" fill="#a8466a"/>
<rect x="1658.09" y="258.30" width="15.54" height="3.700" fill="#8a8a8a"/>
<rect x="1642.20" y="270.30" width="13.27" height="3.700" fill="#a8466a"/>
<rect x="1658.09" y="270.30" width="24.62" height="3.700" fill="#3d8ba3"/>
<rect x="1683.06" y="270.30" width="1.92" height="3.700" fill="#8a8a8a"/>
<rect x="1687.60" y="270.30" width="8.73" height="3.700" fill="#8a7aad"/>
<rect x="1698.95" y="270.30" width="1.92" height="3.700" fill="#8a8a8a"/>
<rect x="1650.25" y="276.30" width="6.46" height="3.700" fill="#a8466a"/>
<rect x="1659.33" y="276.30" width="8.73" height="3.700" fill="#3a8092"/>
<rect x="1668.41" y="276.30" width="1.92" height="3.700" fill="#8a8a8a"/>
<rect x="1672.95" y="276.30" width="8.73" height="3.700" fill="#a8466a"/>
<rect x="1684.30" y="276.30" width="8.73" height="3.700" fill="#8a7aad"/>
<rect x="1695.65" y="276.30" width="1.92" height="3.700" fill="#8a8a8a"/>
<rect x="1660.20" y="282.30" width="13.27" height="3.700" fill="#8a7aad"/>
<rect x="1676.09" y="282.30" width="1.92" height="3.700" fill="#8a8a8a"/>
<rect x="1670.15" y="288.30" width="11.00" height="3.700" fill="#8a7aad"/>
<rect x="1681.50" y="288.30" width="1.92" height="3.700" fill="#8a8a8a"/>
<rect x="1683.77" y="288.30" width="24.62" height="3.700" fill="#8a7aad"/>
<rect x="1711.01" y="288.30" width="15.54" height="3.700" fill="#b25648"/>
<rect x="1726.90" y="288.30" width="1.92" height="3.700" fill="#8a8a8a"/>
<rect x="1680.10" y="294.30" width="1.92" height="3.700" fill="#8a8a8a"/>
<rect x="1682.37" y="294.30" width="22.35" height="3.700" fill="#6c55a3"/>
<rect x="1705.07" y="294.30" width="4.19" height="3.700" fill="#8a8a8a"/>
<rect x="1709.61" y="294.30" width="11.00" height="3.700" fill="#6c55a3"/>
<rect x="1720.96" y="294.30" width="1.92" height="3.700" fill="#8a8a8a"/>
<rect x="1680.10" y="300.30" width="1.92" height="3.700" fill="#8a8a8a"/>
<rect x="1682.37" y="300.30" width="33.70" height="3.700" fill="#6c55a3"/>
<rect x="1716.42" y="300.30" width="4.19" height="3.700" fill="#8a8a8a"/>
<rect x="1720.96" y="300.30" width="8.73" height="3.700" fill="#6c55a3"/>
<rect x="1730.04" y="300.30" width="1.92" height="3.700" fill="#8a8a8a"/>
<rect x="1670.15" y="306.30" width="8.73" height="3.700" fill="#8a7aad"/>
<rect x="1679.23" y="306.30" width="1.92" height="3.700" fill="#8a8a8a"/>
<rect x="1681.50" y="306.30" width="15.54" height="3.700" fill="#b25648"/>
<rect x="1699.66" y="306.30" width="15.54" height="3.700" fill="#b25648"/>
<rect x="1715.55" y="306.30" width="1.92" height="3.700" fill="#8a8a8a"/>
<rect x="1660.20" y="312.30" width="1.92" height="3.700" fill="#8a8a8a"/>
<rect x="1660.20" y="318.30" width="1.92" height="3.700" fill="#8a8a8a"/>
<rect x="1662.47" y="318.30" width="15.54" height="3.700" fill="#6c55a3"/>
<rect x="1678.36" y="318.30" width="4.19" height="3.700" fill="#8a8a8a"/>
<rect x="1650.25" y="324.30" width="1.92" height="3.700" fill="#8a8a8a"/>
<rect x="1642.20" y="330.30" width="1.92" height="3.700" fill="#8a8a8a"/>
<rect x="1642.20" y="342.30" width="17.81" height="3.700" fill="#7356ab"/>
<rect x="1662.63" y="342.30" width="1.92" height="3.700" fill="#8a8a8a"/>
<rect x="1650.25" y="348.30" width="24.62" height="3.700" fill="#6aa592"/>
<rect x="1675.22" y="348.30" width="4.19" height="3.700" fill="#8a8a8a"/>
<rect x="1642.20" y="354.30" width="1.92" height="3.700" fill="#8a8a8a"/>
<path d="M714.200 1805.800H738.200Q739.600 1805.800 740.600 1807L746.600 1815.200Q747.400 1816.500 746.600 1817.800L740.600 1826Q739.600 1827.200 738.200 1827.200H714.200Q712.200 1827.200 712.200 1825.200V1807.800Q712.200 1805.800 714.200 1805.800Z" fill="#2b5aa8"/>
<rect x="2801.800" y="1804.800" width="23.200" height="22.200" rx="3.500" stroke="#585858" stroke-width="1.900"/><rect x="2805.400" y="1818.800" width="16" height="5" rx="1" fill="#585858"/>
<g stroke="#e2e2e2" stroke-width="1.900"><path d="M1810.500 243H1824.500M1812.800 243.300L1813.600 252.600Q1808.300 255.400 1807.800 261.200H1827.200Q1826.700 255.400 1821.400 252.600L1822.200 243.300"/><path d="M1817.500 261.500V272.500"/></g>
<path d="M1890 259Q1896.500 249.800 1904.500 249.800Q1912.500 249.800 1919 259Q1912.500 268.200 1904.500 268.200Q1896.500 268.200 1890 259Z" fill="#fff"/><circle cx="1904.500" cy="259" r="6.300" fill="#2b4371"/><circle cx="1904.500" cy="259" r="2.700" fill="#fff"/>
<g stroke="#3b82e3" stroke-width="1.500"><circle cx="2323.200" cy="1004.700" r="12.700"/><ellipse cx="2323.200" cy="1004.700" rx="6.200" ry="12.700"/><path d="M2323.200 992V1017.400M2310.500 1004.700H2335.900M2312.300 998.200Q2323.200 1001.200 2334.100 998.200M2312.300 1011.200Q2323.200 1008.200 2334.100 1011.200"/></g>
<path d="M1813.800 1735.800V1748.200Q1813.800 1749.700 1815.100 1749L1825.300 1742.900Q1826.400 1742 1825.300 1741.100L1815.100 1735Q1813.800 1734.300 1813.800 1735.800Z" fill="#fff"/>
<rect x="1854.800" y="1731" width="23.400" height="22.800" rx="3" stroke="#e4e4e4" stroke-width="1.900"/><path d="M1863 1735.500V1749L1866.400 1746L1868.800 1751.200L1870.800 1750.300L1868.500 1745.200H1872.800Z" fill="#e4e4e4"/>
<rect x="1902.7" y="1731.0" width="6.600" height="9.800" rx="1.300" stroke="#e4e4e4" stroke-width="1.700"/>
<rect x="1914.0" y="1731.0" width="6.600" height="9.800" rx="1.300" stroke="#e4e4e4" stroke-width="1.700"/>
<rect x="1925.3" y="1731.0" width="6.600" height="9.800" rx="1.300" stroke="#e4e4e4" stroke-width="1.700"/>
<rect x="1902.7" y="1744.6" width="6.600" height="9.800" rx="1.300" stroke="#e4e4e4" stroke-width="1.700"/>
<rect x="1914.0" y="1744.6" width="6.600" height="9.800" rx="1.300" stroke="#e4e4e4" stroke-width="1.700"/>
<rect x="1925.3" y="1744.6" width="6.600" height="9.800" rx="1.300" stroke="#e4e4e4" stroke-width="1.700"/>
<rect x="1989.800" y="1730.400" width="24.800" height="11" rx="5.500" stroke="#e4e4e4" stroke-width="1.800"/><rect x="1992.800" y="1733.300" width="11" height="5.200" rx="2.600" fill="#e4e4e4"/><rect x="1989" y="1744" width="26.400" height="11.600" rx="5.800" fill="#e4e4e4"/><rect x="2002" y="1747.200" width="10.600" height="5.200" rx="2.600" fill="#2b2b2c"/>
<rect x="2075.500" y="1729" width="16.200" height="26.800" rx="3.600" stroke="#e4e4e4" stroke-width="1.900"/><rect x="2078.200" y="1731.800" width="10.800" height="21.200" rx="1.500" fill="#5a5a5a"/><path d="M2081.200 1731.600H2086" stroke="#e4e4e4" stroke-width="1.500"/><path d="M2080.500 1753.200H2086.700" stroke="#e4e4e4" stroke-width="1.200"/>
<path d="M2393.800 1738.800L2401.600 1746.800L2409.400 1738.800" stroke="#e4e4e4" stroke-width="2.600"/>
<circle cx="2677.8" cy="1739.8" r="9.700" stroke="#e4e4e4" stroke-width="1.900"/><path d="M2684.9 1746.9L2693.2 1755.2" stroke="#e4e4e4" stroke-width="2.400"/>
<path d="M2673.3 1739.8H2682.3" stroke="#e4e4e4" stroke-width="1.800"/>
<circle cx="2727.0" cy="1739.8" r="9.700" stroke="#e4e4e4" stroke-width="1.900"/><path d="M2734.1 1746.9L2742.4 1755.2" stroke="#e4e4e4" stroke-width="2.400"/>
<path d="M2724.8 1736.6L2727.4 1734.8V1744.8" stroke="#e4e4e4" stroke-width="1.700"/>
<circle cx="2775.4" cy="1739.8" r="9.700" stroke="#e4e4e4" stroke-width="1.900"/><path d="M2782.5 1746.9L2790.8 1755.2" stroke="#e4e4e4" stroke-width="2.400"/>
<rect x="2771.2" y="1735.6" width="8.400" height="8.400" rx="1.500" stroke="#e4e4e4" stroke-width="1.700"/>
<circle cx="2824.2" cy="1739.8" r="9.700" stroke="#e4e4e4" stroke-width="1.900"/><path d="M2831.3 1746.9L2839.6 1755.2" stroke="#e4e4e4" stroke-width="2.400"/>
<path d="M2819.7 1739.8H2828.7M2824.2 1735.3V1744.3" stroke="#e4e4e4" stroke-width="1.800"/>
</svg>
</div></div><div id="edge"></div></div>
<div class="wm" style="will-change:transform;right:46.500px;top:1857.300px;height:40px;line-height:40px;font-size:24.850px;color:#fdfdfd;text-shadow:1.300px 1.300px 0.600px #2e2e2e,0 0 1px rgba(0,0,0,.25)">掘金技术社区 @ Moe的技术工坊</div>
</body></html>
